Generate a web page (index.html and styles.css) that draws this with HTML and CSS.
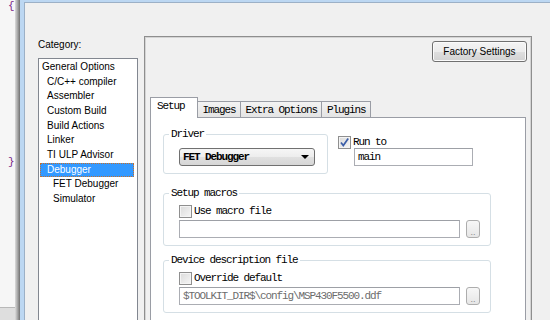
FILE: index.html
```html
<!doctype html>
<html lang="en">
<head>
	<meta charset="UTF-8">
	<title>Options</title>
	<link rel="stylesheet" href="styles.css">
</head>
<body>
	<div class="screen">
		<div class="editor">
			<div class="code">
				<div class="line">{</div>
				<div class="line brace">}</div>
			</div>
			<div class="hscroll"></div>
		</div>
		<div class="shade"></div>
		<div class="frame">
			<div class="dialog">
				<div class="side">
					<div class="caption">Category:</div>
					<div class="tree">
						<div class="node lv0">General Options</div>
						<div class="node lv1">C/C++ compiler</div>
						<div class="node lv1">Assembler</div>
						<div class="node lv1">Custom Build</div>
						<div class="node lv1">Build Actions</div>
						<div class="node lv1">Linker</div>
						<div class="node lv1">TI ULP Advisor</div>
						<div class="node lv1 sel">Debugger</div>
						<div class="node lv2">FET Debugger</div>
						<div class="node lv2">Simulator</div>
					</div>
				</div>
				<div class="page">
					<div class="page-head">
						<button class="btn factory">Factory Settings</button>
					</div>
					<div class="tabs">
						<span class="tab on">Setup</span>
						<span class="tab">Images</span>
						<span class="tab">Extra Options</span>
						<span class="tab">Plugins</span>
					</div>
					<div class="panel">
						<div class="row">
							<fieldset class="group driver">
								<legend>Driver</legend>
								<div class="body">
									<div class="combo">
										<span>FET Debugger</span>
										<i class="arrow"></i>
									</div>
								</div>
							</fieldset>
							<div class="runto">
								<label class="check">
									<span class="box">
										<svg width="11" height="11" viewBox="0 0 11 11"><path d="M2 5.5 L4.3 8.5 L9.2 1.5" fill="none" stroke="#3b5ea8" stroke-width="1.7"/></svg>
									</span>
									Run to
								</label>
								<div class="field short">main</div>
							</div>
						</div>
						<fieldset class="group macros">
							<legend>Setup macros</legend>
							<div class="body">
								<label class="check"><span class="box"></span>Use macro file</label>
								<div class="browse">
									<div class="field wide"></div>
									<button class="dots">..</button>
								</div>
							</div>
						</fieldset>
						<fieldset class="group device">
							<legend>Device description file</legend>
							<div class="body">
								<label class="check"><span class="box"></span>Override default</label>
								<div class="browse">
									<div class="field wide off">$TOOLKIT_DIR$\config\MSP430F5500.ddf</div>
									<button class="dots">..</button>
								</div>
							</div>
						</fieldset>
					</div>
				</div>
			</div>
		</div>
	</div>
</body>
</html>
```

FILE: styles.css
```css
*{
	padding:0;
	margin:0;
	box-sizing:border-box;
}
body{
	width:550px;
	height:320px;
	overflow:hidden;
	background:#f0f0f0;
	font-family:"Liberation Sans", Arial, sans-serif;
	font-size:10px;
	color:#000;
}
.screen{
	display:flex;
	height:320px;
}
/* editor behind the dialog */
.editor{
	width:15px;
	display:flex;
	flex-direction:column;
	background:#f6f6f6;
}
.code{
	height:307px;
	padding-left:8px;
	font:11px/12px "Liberation Mono", monospace;
	color:#7a1f86;
	overflow:hidden;
}
.line.brace{
	margin-top:144px;
}
.hscroll{
	flex:1;
	border-top:1px solid #b8b8b8;
	background:#dedede;
}
.shade{
	width:5px;
	background:linear-gradient(to right, #dcdcdc, #a8a8a8 50%, #707070);
}
.frame{
	flex:1;
	border-left:4px solid #bcd7f2;
	border-top:2px solid #bcd7f2;
}
.dialog{
	height:100%;
	display:flex;
	border-left:1px solid #9cb0c6;
	border-top:1px solid #9cb0c6;
}
/* category tree */
.side{
	width:113px;
	padding:35px 0 0 13px;
}
.caption{
	line-height:14px;
	margin-bottom:6px;
}
.tree{
	height:400px;
	border:1px solid #828790;
	background:#fff;
	padding-top:1px;
}
.node{
	line-height:14.67px;
	height:14.67px;
	white-space:nowrap;
}
.lv0{ padding-left:3px; }
.lv1{ padding-left:8px; }
.lv2{ padding-left:14px; }
.node.sel{
	margin:0 3px 0 1px;
	padding-left:6px;
	line-height:12.67px;
	background:#3399ff;
	color:#fff;
	border:1px dotted #c8702a;
}
/* right page */
.page{
	width:388px;
	height:400px;
	margin:33px 0 0 6px;
	padding:4px 5px 0 5px;
	border:1px solid #8e8e8e;
	box-shadow:inset 0 0 0 1px #d4d4d4;
}
.page-head{
	display:flex;
	justify-content:flex-end;
	margin-right:-1px;
}
.btn{
	font-family:"Liberation Sans", Arial, sans-serif;
	font-size:10px;
	color:#000;
	border:1px solid #707070;
	border-radius:3px;
	background:linear-gradient(#f4f4f4, #ececec 50%, #dfdfdf 51%, #d2d2d2);
	box-shadow:inset 0 0 0 1px #fbfbfb;
}
.factory{
	width:95px;
	height:21px;
}
.tabs{
	display:flex;
	align-items:flex-end;
	margin-top:35px;
	font:11px/14px "Liberation Mono", monospace;
	letter-spacing:-1.1px;
}
.tab{
	height:16px;
	padding:1px 4px 0 5px;
	margin-left:-1px;
	border:1px solid #9a9da5;
	border-bottom:none;
	background:linear-gradient(#f3f3f3, #e4e4e4);
	white-space:nowrap;
}
.tab.on{
	position:relative;
	z-index:1;
	height:21px;
	margin:0 0 -1px 0;
	padding:2px 12px 0 6px;
	line-height:13px;
	background:#fff;
}
.panel{
	height:400px;
	border:1px solid #9a9da5;
	background:#fff;
	padding:10px 0 0 12px;
	font:11px "Liberation Mono", monospace;
	letter-spacing:-1.1px;
}
.row{
	display:flex;
	align-items:flex-start;
}
.group{
	border:1px solid #d5dfe5;
	border-radius:3px;
	padding:0 0 7px 5px;
}
.group legend{
	padding:0 2px;
	line-height:12px;
}
.group .body{
	padding-left:10px;
}
.driver{
	width:165px;
}
.driver .body{
	padding-top:8px;
}
.combo{
	width:136px;
	height:18px;
	display:flex;
	align-items:center;
	justify-content:space-between;
	padding:0 5px 0 3px;
	border:1px solid #707070;
	border-radius:3px;
	background:linear-gradient(#f6f6f6, #ededed 50%, #e0e0e0 51%, #d6d6d6);
	font-weight:bold;
}
.arrow{
	width:0;
	height:0;
	border-left:4px solid transparent;
	border-right:4px solid transparent;
	border-top:4px solid #000;
}
.runto{
	margin-left:10px;
	padding-top:8px;
}
.check{
	display:flex;
	align-items:center;
	height:12px;
	line-height:12px;
}
.box{
	width:13px;
	height:13px;
	margin-right:2px;
	border:1px solid #8f8f8f;
	background:linear-gradient(135deg, #dadada, #f6f6f6);
	box-shadow:inset 0 0 0 1px #f4f4f4;
	display:flex;
	align-items:center;
	justify-content:center;
}
.field{
	height:18px;
	line-height:16px;
	padding-left:3px;
	border:1px solid #abadb3;
	border-top-color:#9da0a6;
	background:#fff;
	white-space:nowrap;
	overflow:hidden;
}
.field.short{
	width:119px;
	margin:0 0 0 16px;
}
.field.off{
	color:#6d6d6d;
}
.macros{
	width:328px;
	margin-top:13px;
}
.device{
	width:328px;
	margin-top:8px;
}
.macros .body,
.device .body{
	padding-top:6px;
}
.browse{
	display:flex;
	gap:6px;
	margin-top:3px;
}
.field.wide{
	width:281px;
}
.dots{
	width:14px;
	height:18px;
	border:1px solid #adadad;
	border-radius:3px;
	background:linear-gradient(#f7f7f7, #e6e6e6);
	color:#8a8a8a;
	font:9px/10px "Liberation Sans", Arial, sans-serif;
	padding-top:5px;
}
```
